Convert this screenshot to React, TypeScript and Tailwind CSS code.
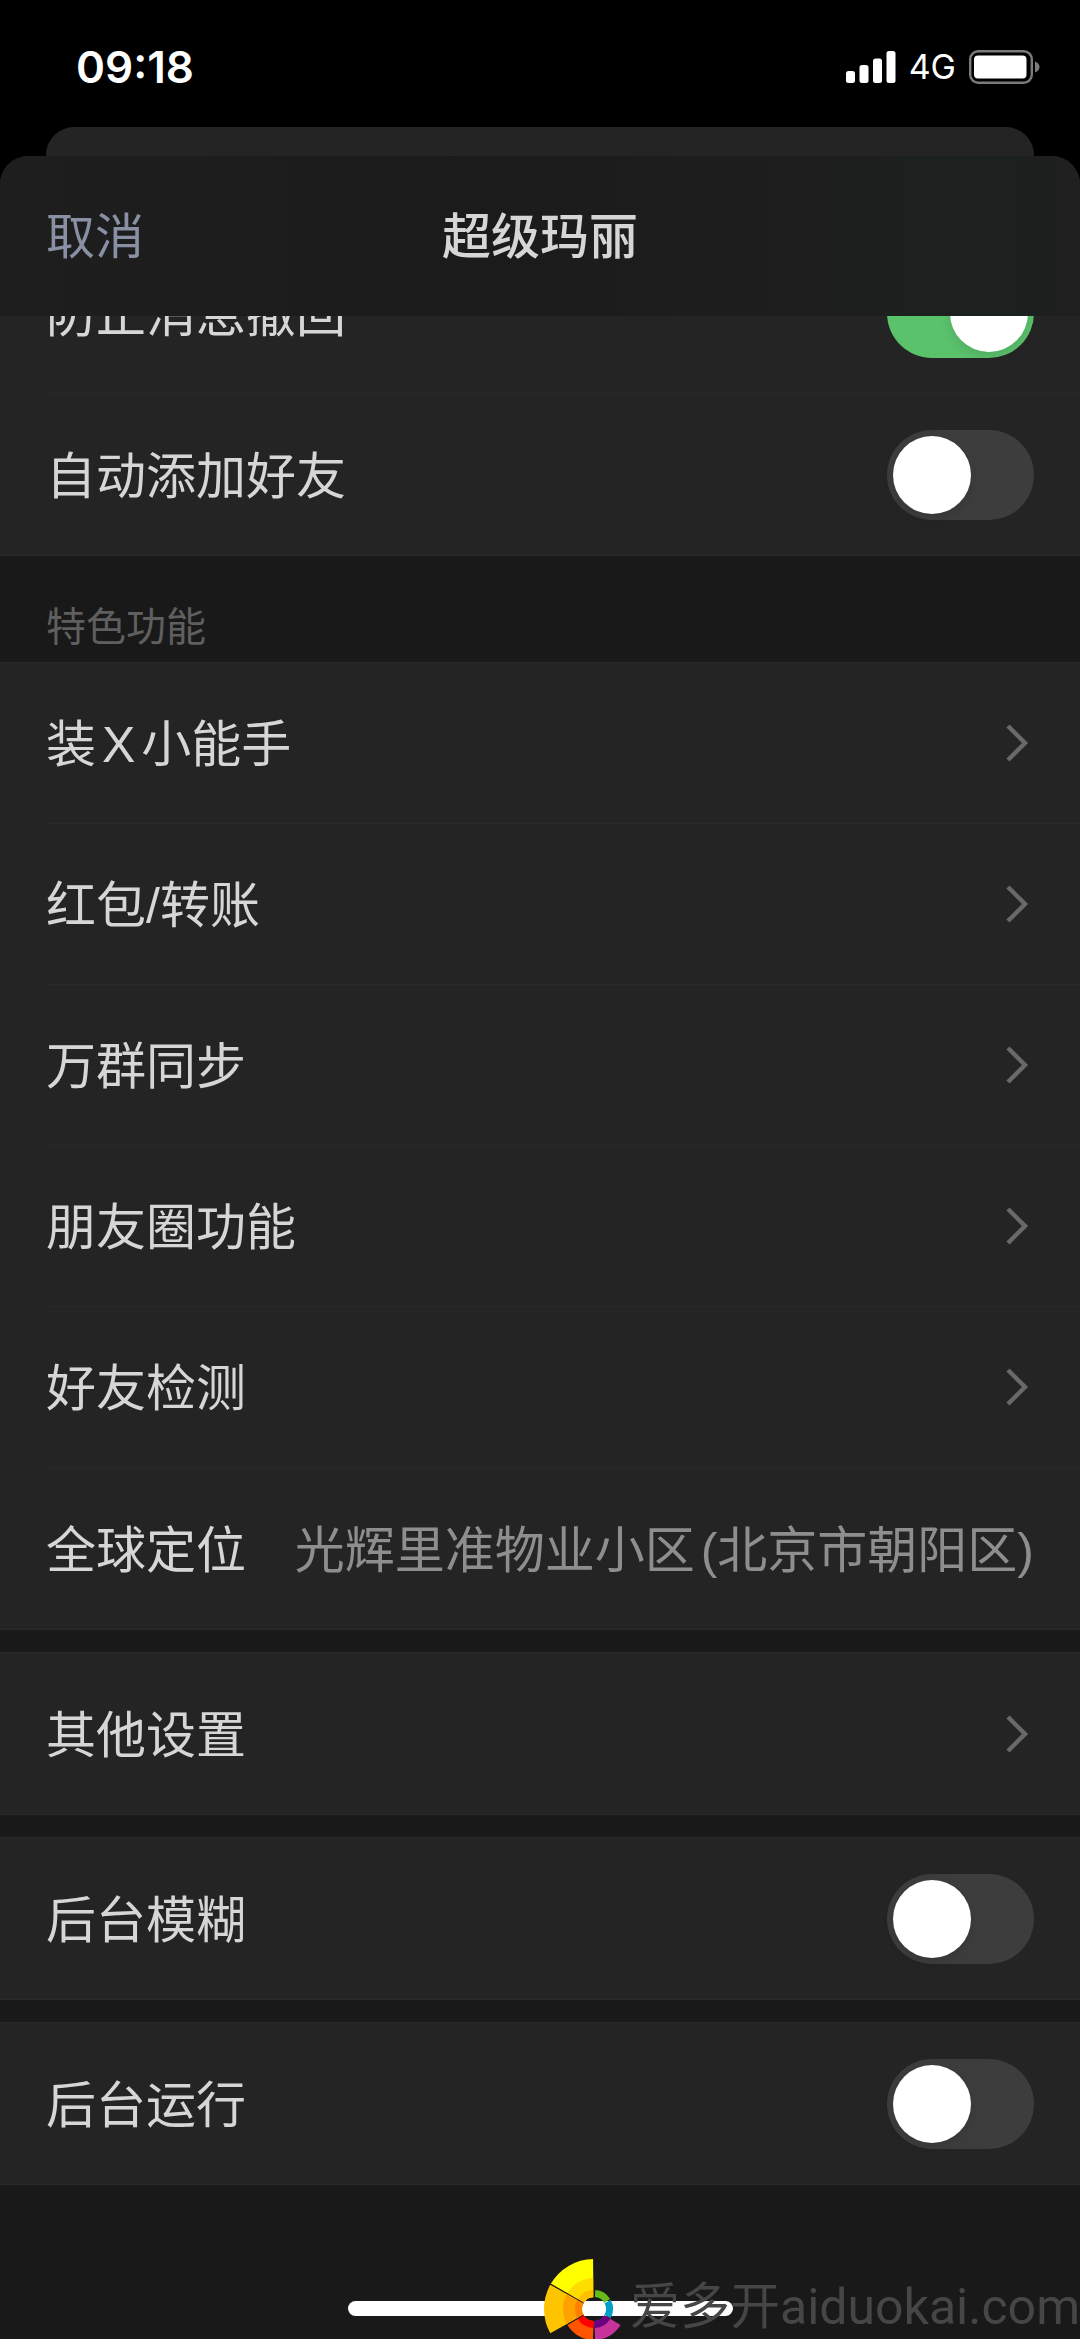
import { useState } from "react"

const labelClass = "pt-1 text-[50px] leading-[64px] text-[#d6d6d6]"

const SignalIcon = () => (
  <svg className="w-[50px] h-[32px]" viewBox="0 0 50 32" fill="#fff" aria-hidden="true">
    <rect x="0" y="20" width="9" height="12" rx="2.5" />
    <rect x="13.5" y="14" width="9" height="18" rx="2.5" />
    <rect x="27" y="7.5" width="9" height="24.5" rx="2.5" />
    <rect x="40.5" y="0" width="9" height="32" rx="2.5" />
  </svg>
)

const BatteryIcon = () => (
  <svg className="w-[71px] h-[34px]" viewBox="0 0 71 34" fill="none" aria-hidden="true">
    <rect x="1.2" y="1.2" width="61.6" height="31.6" rx="8" stroke="#7b7b7b" strokeWidth="2.4" />
    <rect x="5" y="5.5" width="52.5" height="23" rx="4" fill="#fff" />
    <path d="M66 11.5c3 1 4.5 3 4.5 5.5s-1.5 4.5-4.5 5.5z" fill="#7b7b7b" />
  </svg>
)

const Chevron = () => (
  <svg className="w-[28px] h-[40px] shrink-0" viewBox="0 0 28 40" fill="none" aria-hidden="true">
    <path d="M2 3l17 17L2 37" stroke="#696969" strokeWidth="4.4" />
  </svg>
)

const LinkRow = ({ children }) => (
  <button type="button" className="w-full h-[161px] pr-[46px] flex items-center justify-between text-left">
    <span className={labelClass}>{children}</span>
    <Chevron />
  </button>
)

const SwitchRow = ({ label, defaultOn = false }) => {
  const [on, setOn] = useState(defaultOn)
  return (
    <label className="h-[161px] pr-[46px] flex items-center justify-between">
      <span className={labelClass}>{label}</span>
      <input
        type="checkbox"
        role="switch"
        checked={on}
        onChange={() => setOn(!on)}
        className="appearance-none shrink-0 w-[147px] h-[90px] p-[6px] rounded-full bg-[#3d3d3d] checked:bg-[#5bc26c] before:block before:size-[78px] before:rounded-full before:bg-white before:shadow-[0_4px_12px_rgba(0,0,0,0.12)] checked:before:translate-x-[57px]"
      />
    </label>
  )
}

const Group = ({ children }) => (
  <section className="bg-[#242424] border-y border-[#292929] pl-[46px]">
    <div className="divide-y divide-[#292929]">{children}</div>
  </section>
)

// Ring segment between two radii, angles are clockwise from 12 o'clock
const segment = (from, to, inner, outer) => {
  const point = (angle, r) => {
    const a = (angle * Math.PI) / 180
    return `${(r * Math.sin(a)).toFixed(2)} ${(-r * Math.cos(a)).toFixed(2)}`
  }
  return `M${point(from, inner)}L${point(from, outer)}A${outer} ${outer} 0 0 1 ${point(to, outer)}L${point(to, inner)}A${inner} ${inner} 0 0 0 ${point(from, inner)}Z`
}

const wheel = [
  { from: 300, to: 359, inner: 12, outer: 50, color: "#ffff00" },
  { from: 300, to: 359, inner: 12, outer: 31, color: "#ffdc00" },
  { from: 300, to: 359, inner: 12, outer: 19, color: "#ffbe00" },
  { from: 241, to: 299, inner: 12, outer: 50, color: "#ffc400" },
  { from: 241, to: 299, inner: 12, outer: 31, color: "#ffa200" },
  { from: 241, to: 299, inner: 12, outer: 19, color: "#ff8000" },
  { from: 182, to: 239, inner: 12, outer: 31, color: "#ff5500" },
  { from: 182, to: 239, inner: 12, outer: 19, color: "#ff0000" },
  { from: 121, to: 178, inner: 12, outer: 31, color: "#c8329b" },
  { from: 121, to: 178, inner: 12, outer: 19, color: "#6b0080" },
  { from: 62, to: 119, inner: 12, outer: 19, color: "#009fc8" },
  { from: 4, to: 58, inner: 12, outer: 19, color: "#66bb16" },
]

const WheelLogo = () => (
  <svg className="w-[82px] h-[80px] shrink-0" viewBox="-50 -50 82 80" aria-hidden="true">
    {wheel.map((s) => (
      <path key={s.color} d={segment(s.from, s.to, s.inner, s.outer)} fill={s.color} />
    ))}
    <path d="M-43.3 -25L-10.4 -6M-26 15L-10.4 6M0 -50V-12" stroke="#191919" strokeWidth="1" />
  </svg>
)

const App = () => {
  return (
    <div className="min-h-screen flex flex-col bg-black overflow-hidden font-['Liberation_Sans','Noto_Sans_CJK_SC',sans-serif]">
      {/* Status bar */}
      <div className="h-[127px] pt-[6px] pl-[76px] pr-[40px] flex items-center justify-between text-white font-['Inter',sans-serif]">
        <span className="text-[44px] leading-[48px] font-semibold">09:18</span>
        <div className="flex items-center gap-[13px]">
          <SignalIcon />
          <span className="text-[34px] leading-[40px]">4G</span>
          <BatteryIcon />
        </div>
      </div>

      {/* Sheet behind */}
      <div className="h-[29px] mx-[46px] rounded-t-[28px] bg-[#242424]" />

      {/* Settings sheet */}
      <div className="flex-1 flex flex-col rounded-t-[28px] bg-[#191919]">
        <header className="relative z-10 h-[160px] px-[46px] pt-0.5 grid grid-cols-[1fr_auto_1fr] items-center rounded-t-[28px] bg-[linear-gradient(90deg,#1e1e1e_0%,#1b1b1b_45%,#1e1e1e_75%,#1c201f_84%,#1c201f_94%,#1f1f1f_100%)]">
          <button type="button" className="justify-self-start text-[49px] leading-[64px] text-[#8990a3]">
            取消
          </button>
          <h1 className="text-[49px] leading-[64px] font-medium text-[#d6d6d6]">超级玛丽</h1>
        </header>

        <main className="-mt-[84px]">
          <Group>
            <SwitchRow label="防止消息撤回" defaultOn />
            <SwitchRow label="自动添加好友" />
          </Group>

          <h2 className="h-[106px] pl-[46px] pt-[35px] text-[40px] leading-[72px] text-[#5f5f5f]">特色功能</h2>

          <Group>
            <LinkRow>
              装<span className="px-1.5">X</span>小能手
            </LinkRow>
            <LinkRow>红包/转账</LinkRow>
            <LinkRow>万群同步</LinkRow>
            <LinkRow>朋友圈功能</LinkRow>
            <LinkRow>好友检测</LinkRow>
            <button type="button" className="w-full h-[161px] pr-[46px] flex items-center justify-between text-left">
              <span className={labelClass}>全球定位</span>
              <span className="pt-1 text-[50px] leading-[64px] text-[#8e8e8e] whitespace-nowrap">
                光辉里准物业小区<span className="pl-1.5">(</span>北京市朝阳区)
              </span>
            </button>
          </Group>

          <div className="mt-[22px] flex flex-col gap-[22px]">
            <Group>
              <LinkRow>其他设置</LinkRow>
            </Group>
            <Group>
              <SwitchRow label="后台模糊" />
            </Group>
            <Group>
              <SwitchRow label="后台运行" />
            </Group>
          </div>
        </main>

        {/* Home indicator with the site mark over it */}
        <footer className="relative flex-1 min-h-[154px] flex flex-col items-center justify-end pb-[23px]">
          <div className="w-[385px] h-[15px] rounded-full bg-white" />
          <div className="absolute right-0 bottom-0 flex items-end gap-1">
            <WheelLogo />
            <span className="pb-1 text-[50px] leading-[56px] text-[#464646] whitespace-nowrap font-['Roboto','Noto_Sans_CJK_SC',sans-serif]">
              爱多开aiduokai.com
            </span>
          </div>
        </footer>
      </div>
    </div>
  )
}

export default App
